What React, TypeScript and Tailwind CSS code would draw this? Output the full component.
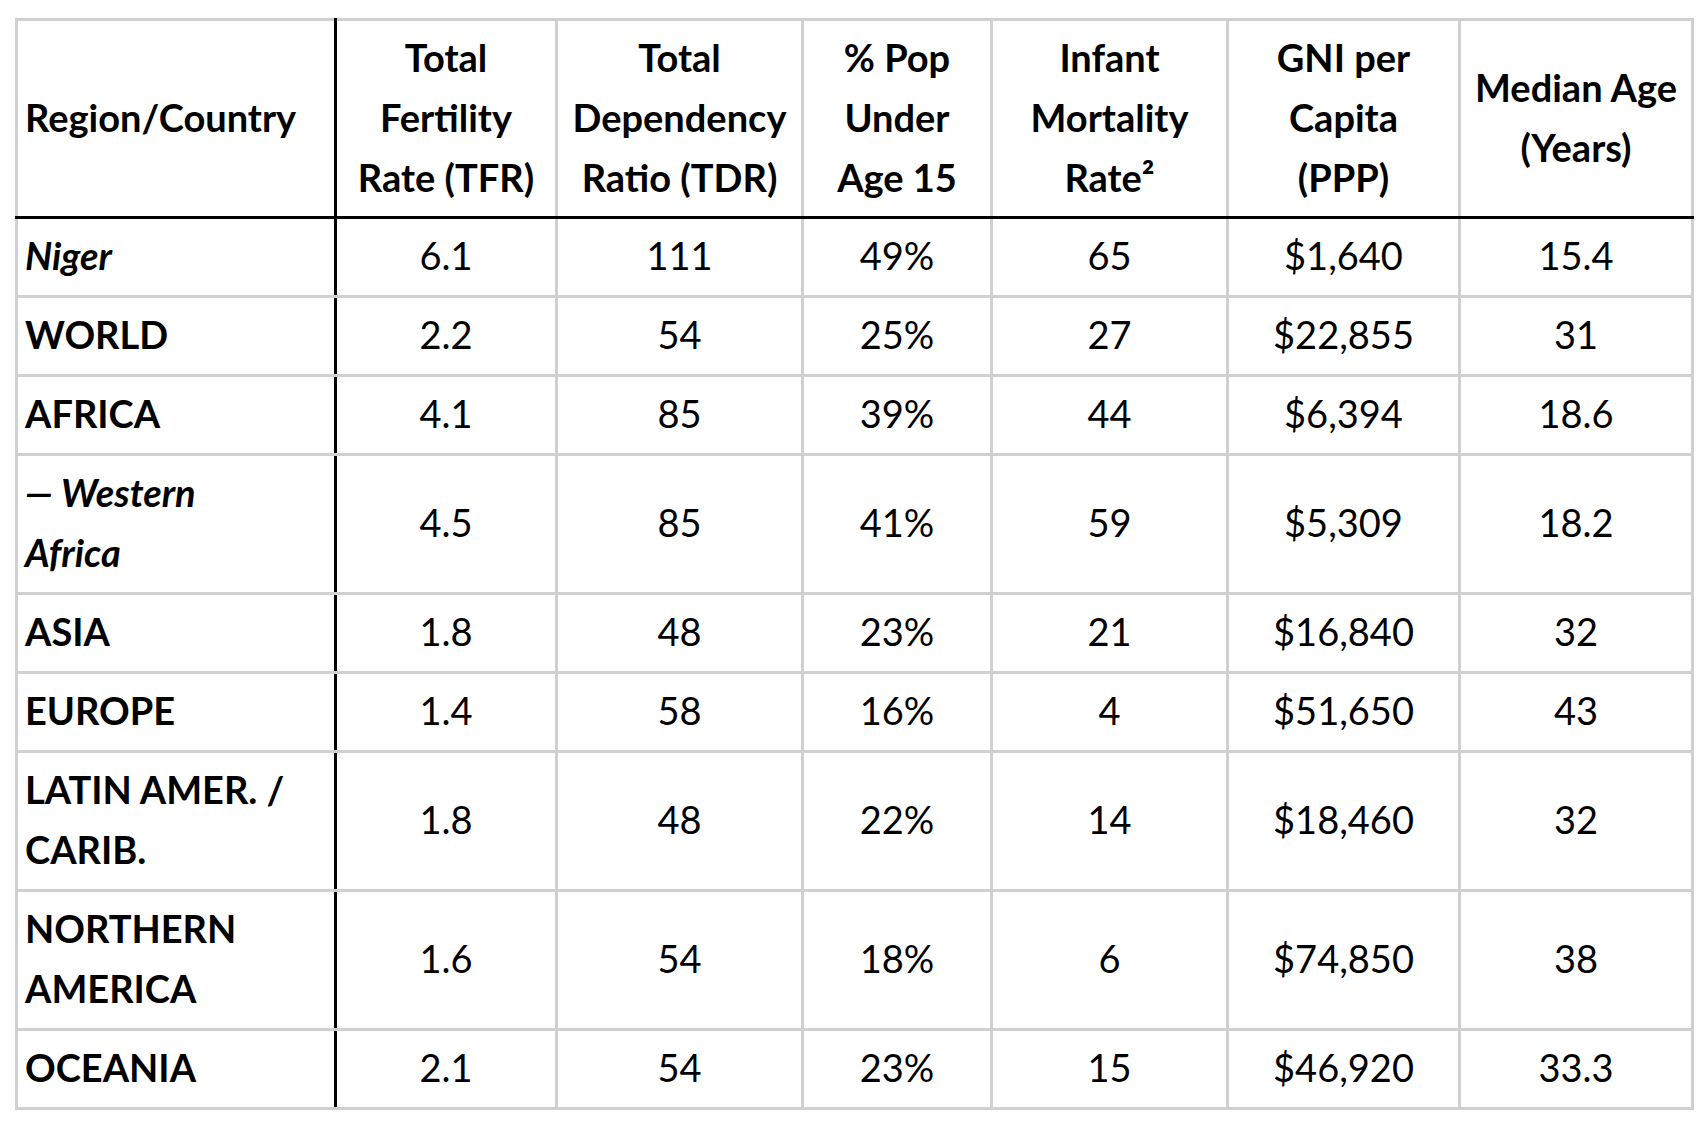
const rows = [
  { name: ["Niger"], italic: true, tfr: "6.1", tdr: "111", pop: "49%", imr: "65", gni: "$1,640", age: "15.4", h: "h-[79px]" },
  { name: ["WORLD"], tfr: "2.2", tdr: "54", pop: "25%", imr: "27", gni: "$22,855", age: "31", h: "h-[79px]" },
  { name: ["AFRICA"], tfr: "4.1", tdr: "85", pop: "39%", imr: "44", gni: "$6,394", age: "18.6", h: "h-[79px]" },
  { name: ["— Western", "Africa"], italic: true, tfr: "4.5", tdr: "85", pop: "41%", imr: "59", gni: "$5,309", age: "18.2", h: "h-[139px]" },
  { name: ["ASIA"], tfr: "1.8", tdr: "48", pop: "23%", imr: "21", gni: "$16,840", age: "32", h: "h-[79px]" },
  { name: ["EUROPE"], tfr: "1.4", tdr: "58", pop: "16%", imr: "4", gni: "$51,650", age: "43", h: "h-[79px]" },
  { name: ["LATIN AMER. /", "CARIB."], tfr: "1.8", tdr: "48", pop: "22%", imr: "14", gni: "$18,460", age: "32", h: "h-[139px]" },
  { name: ["NORTHERN", "AMERICA"], tfr: "1.6", tdr: "54", pop: "18%", imr: "6", gni: "$74,850", age: "38", h: "h-[139px]" },
  { name: ["OCEANIA"], tfr: "2.1", tdr: "54", pop: "23%", imr: "15", gni: "$46,920", age: "33.3", h: "h-[79px]" },
];

const headers = [
  ["Total", "Fertility", "Rate (TFR)"],
  ["Total", "Dependency", "Ratio (TDR)"],
  ["% Pop", "Under", "Age 15"],
  ["Infant", "Mortality", "Rate²"],
  ["GNI per", "Capita", "(PPP)"],
  ["Median Age", "(Years)"],
];

function Lines({ lines }: { lines: string[] }) {
  return (
    <>
      {lines.map((l, i) => (
        <div key={i} className="whitespace-nowrap">
          {l}
        </div>
      ))}
    </>
  );
}

export default function App() {
  return (
    <div className="min-h-screen bg-white pl-[15px] pt-[18px] text-black" style={{ fontFamily: "Lato, 'Open Sans', sans-serif" }}>
      <table className="w-[1676px] table-fixed border-collapse text-[38px] leading-[60px]">
        <colgroup>
          <col className="w-[319px]" />
          <col className="w-[221px]" />
          <col className="w-[246px]" />
          <col className="w-[189px]" />
          <col className="w-[236px]" />
          <col className="w-[232px]" />
          <col className="w-[233px]" />
        </colgroup>
        <thead>
          <tr className="h-[198px]">
            <th className="border-[3px] border-[#d0d0d0] border-r-black border-b-black pb-[4px] pl-[7px] text-left align-middle font-bold">
              Region/Country
            </th>
            {headers.map((h, i) => (
              <th key={i} className="border-[3px] border-[#d0d0d0] border-b-black pb-[4px] text-center align-middle font-bold">
                <Lines lines={h} />
              </th>
            ))}
          </tr>
        </thead>
        <tbody>
          {rows.map((r) => (
            <tr key={r.name.join(" ")} className={r.h}>
              <td
                className={`border-[3px] border-[#d0d0d0] border-r-black pb-[4px] pl-[7px] align-middle font-bold ${
                  r.italic ? "italic" : ""
                }`}
              >
                <Lines lines={r.name} />
              </td>
              {[r.tfr, r.tdr, r.pop, r.imr, r.gni, r.age].map((v, i) => (
                <td key={i} className="border-[3px] border-[#d0d0d0] pb-[4px] text-center align-middle font-normal">
                  {v}
                </td>
              ))}
            </tr>
          ))}
        </tbody>
      </table>
    </div>
  );
}
